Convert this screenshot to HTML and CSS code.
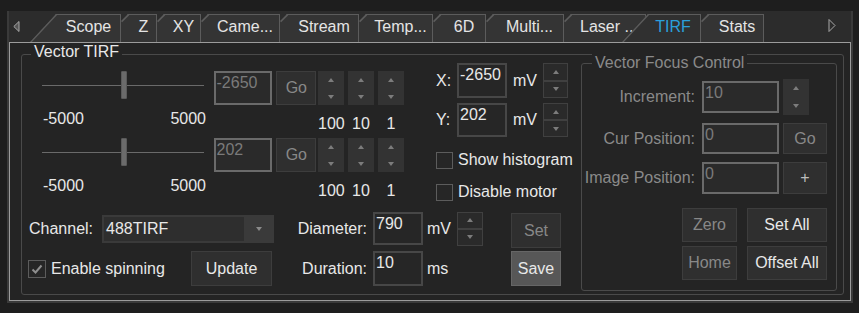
FILE: index.html
```html
<!DOCTYPE html>
<html lang="en">
<head>
    <meta charset="UTF-8">
    <title>Vector TIRF</title>
    <link rel="stylesheet" href="styles.css">
</head>
<body>
    <div class="window">
        <div class="tabbar">
            <div class="tabbar__scroll">
                <svg width="7" height="11" viewBox="0 0 7 11"><polygon points="6,0.5 6,10.5 0.8,5.5" fill="#555" stroke="#a8a8a8"/></svg>
            </div>
            <div class="tab tab--slant tab--scope">Scope</div>
            <div class="tab tab--z">Z</div>
            <div class="tab tab--xy">XY</div>
            <div class="tab tab--camera">Came...</div>
            <div class="tab tab--stream">Stream</div>
            <div class="tab tab--temp">Temp...</div>
            <div class="tab tab--6d">6D</div>
            <div class="tab tab--multi">Multi...</div>
            <div class="tab tab--laser">Laser ..</div>
            <div class="tab tab--slant tab--active">TIRF</div>
            <div class="tab tab--stats">Stats</div>
            <div class="tabbar__spacer"></div>
            <div class="tabbar__scroll tabbar__scroll--right">
                <svg width="8" height="13" viewBox="0 0 8 13"><polygon points="1,0.5 1,12.5 7,6.5" fill="none" stroke="#a8a8a8"/></svg>
            </div>
        </div>

        <div class="pane">
            <div class="group">
                <div class="group__title">Vector TIRF</div>
                <div class="group__body">
                    <div class="main">
                        <div class="main__top">
                            <div class="sliders">
                                <div class="slider-row">
                                    <div class="slider">
                                        <span class="slider__track slider__track--left"></span>
                                        <span class="slider__handle"></span>
                                        <span class="slider__track"></span>
                                    </div>
                                    <div class="field field--disabled">-2650</div>
                                    <button class="btn" disabled>Go</button>
                                    <div class="spin"><span class="arrow arrow--up"></span><span class="arrow arrow--down"></span></div>
                                    <div class="spin"><span class="arrow arrow--up"></span><span class="arrow arrow--down"></span></div>
                                    <div class="spin"><span class="arrow arrow--up"></span><span class="arrow arrow--down"></span></div>
                                </div>
                                <div class="scale-row">
                                    <div class="scale"><span>-5000</span><span>5000</span></div>
                                    <div class="steps"><span>100</span><span>10</span><span>1</span></div>
                                </div>
                                <div class="slider-row">
                                    <div class="slider">
                                        <span class="slider__track slider__track--left"></span>
                                        <span class="slider__handle"></span>
                                        <span class="slider__track"></span>
                                    </div>
                                    <div class="field field--disabled">202</div>
                                    <button class="btn" disabled>Go</button>
                                    <div class="spin"><span class="arrow arrow--up"></span><span class="arrow arrow--down"></span></div>
                                    <div class="spin"><span class="arrow arrow--up"></span><span class="arrow arrow--down"></span></div>
                                    <div class="spin"><span class="arrow arrow--up"></span><span class="arrow arrow--down"></span></div>
                                </div>
                                <div class="scale-row">
                                    <div class="scale"><span>-5000</span><span>5000</span></div>
                                    <div class="steps"><span>100</span><span>10</span><span>1</span></div>
                                </div>
                            </div>

                            <div class="xy">
                                <div class="xy__row">
                                    <span class="xy__label">X:</span>
                                    <div class="field">-2650</div>
                                    <span class="unit">mV</span>
                                    <div class="spin spin--split">
                                        <span class="spin__half"><span class="arrow arrow--up"></span></span>
                                        <span class="spin__half"><span class="arrow arrow--down"></span></span>
                                    </div>
                                </div>
                                <div class="xy__row">
                                    <span class="xy__label">Y:</span>
                                    <div class="field">202</div>
                                    <span class="unit">mV</span>
                                    <div class="spin spin--split">
                                        <span class="spin__half"><span class="arrow arrow--up"></span></span>
                                        <span class="spin__half"><span class="arrow arrow--down"></span></span>
                                    </div>
                                </div>
                                <label class="checkrow"><span class="check"></span>Show histogram</label>
                                <label class="checkrow"><span class="check"></span>Disable motor</label>
                            </div>
                        </div>

                        <div class="controls">
                            <div class="controls__lead">
                                <span class="channel-label">Channel:</span>
                                <div class="combo">
                                    <div class="combo__field">488TIRF</div>
                                    <div class="combo__arrow"><span class="arrow arrow--down arrow--combo"></span></div>
                                </div>
                            </div>
                            <span class="label--right">Diameter:</span>
                            <div class="field">790</div>
                            <span class="unit">mV</span>
                            <div class="spin spin--split">
                                <span class="spin__half"><span class="arrow arrow--up"></span></span>
                                <span class="spin__half"><span class="arrow arrow--down"></span></span>
                            </div>
                            <button class="btn btn--cell btn--set" disabled>Set</button>

                            <div class="controls__lead">
                                <label class="checkrow checkrow--wide">
                                    <span class="check">
                                        <svg width="16" height="16" viewBox="0 0 16 16"><polyline points="3.5,8.5 6.5,11.5 12.5,4.5" fill="none" stroke="#8e8e8e" stroke-width="2"/></svg>
                                    </span>Enable spinning
                                </label>
                                <button class="btn btn--update">Update</button>
                            </div>
                            <span class="label--right">Duration:</span>
                            <div class="field field--tall">10</div>
                            <span class="unit">ms</span>
                            <span></span>
                            <button class="btn btn--cell btn--primary">Save</button>
                        </div>
                    </div>

                    <div class="vfc">
                        <div class="vfc__title">Vector Focus Control</div>
                        <div class="vfc__grid">
                            <span class="vfc__label">Increment:</span>
                            <div class="field field--disabled field--inc">10</div>
                            <div class="spin spin--tall"><span class="arrow arrow--up"></span><span class="arrow arrow--down"></span></div>

                            <span class="vfc__label">Cur Position:</span>
                            <div class="field field--disabled">0</div>
                            <button class="btn" disabled>Go</button>

                            <span class="vfc__label">Image Position:</span>
                            <div class="field field--disabled">0</div>
                            <button class="btn btn--plus">+</button>
                        </div>
                        <div class="vfc__actions">
                            <div class="vfc__pair">
                                <button class="btn btn--narrow" disabled>Zero</button>
                                <button class="btn btn--wide">Set All</button>
                            </div>
                            <div class="vfc__pair">
                                <button class="btn btn--narrow" disabled>Home</button>
                                <button class="btn btn--wide">Offset All</button>
                            </div>
                        </div>
                    </div>
                </div>
            </div>
        </div>
    </div>
</body>
</html>
```

FILE: styles.css
```css
* {
    box-sizing: border-box;
    margin: 0;
    padding: 0;
}

body {
    width: 859px;
    height: 313px;
    overflow: hidden;
    background-color: #1e1e1e;
    font-family: "Liberation Sans", Arial, sans-serif;
    font-size: 16px;
    line-height: 18px;
    color: #e8e8e8;
}

.window {
    width: 846px;
    margin: 11px 0 0 7px;
    border: 2px solid #3a3a3a;
    border-top: 0;
    background-color: #2c2c2c;
}

/* tab strip */
.tabbar {
    display: flex;
    height: 31px;
    padding-top: 3px;
}

.tabbar__scroll {
    flex: none;
    width: 21px;
    padding: 4px 0 0 4px;
}

.tabbar__scroll--right {
    width: 23px;
    padding: 4px 0 0 0;
}

.tabbar__spacer {
    flex: 1;
}

.tab {
    position: relative;
    flex: none;
    height: 28px;
    padding-left: 10px;
    text-align: center;
    line-height: 23px;
    white-space: nowrap;
    color: #e4e4e4;
    background-color: #343434;
    border-top: 1px solid #5c5c5c;
    border-right: 1px solid #5c5c5c;
    clip-path: polygon(7px 0, 100% 0, 100% 100%, 0 100%, 0 7px);
}

.tab::before {
    content: "";
    position: absolute;
    left: -1.5px;
    top: 1.5px;
    width: 10px;
    height: 2px;
    background-color: #5c5c5c;
    transform: rotate(-45deg);
}

.tab--slant {
    padding-left: 27px;
    clip-path: polygon(26px 0, 100% 0, 100% 100%, 0 100%);
}

.tab--slant::before {
    left: -6.5px;
    top: 12px;
    width: 39px;
    transform: rotate(-47deg);
}

.tab--scope { width: 91px; }
.tab--z { width: 36px; }
.tab--xy { width: 44px; }
.tab--camera { width: 79px; }
.tab--stream { width: 79px; }
.tab--temp { width: 74px; }
.tab--6d { width: 53px; }
.tab--multi { width: 78px; }
.tab--stats { width: 63px; }

.tab--laser {
    width: 82px;
    padding-left: 16px;
    text-align: left;
}

.tab--active {
    z-index: 1;
    width: 79px;
    margin-left: -24px;
    padding-left: 24px;
    color: #2a9fdc;
    background-color: #303030;
}

/* page */
.pane {
    height: 259px;
    padding: 11px 6px 5px 11px;
    border: 1px solid #9c9c9c;
    background-color: #242424;
}

.group {
    height: 100%;
    border: 1px solid #4a4a4a;
    border-radius: 3px;
}

.group__title {
    width: fit-content;
    margin: -12px 0 0 9px;
    padding: 0 3px;
    background-color: #242424;
}

.group__body {
    display: flex;
    align-items: flex-start;
}

.main {
    flex: none;
    width: 559px;
}

.main__top {
    display: flex;
    align-items: flex-start;
    height: 151px;
}

.sliders {
    width: 362px;
    margin: 10px 0 0 20px;
}

.slider-row {
    display: flex;
    align-items: flex-start;
    height: 34px;
}

.slider {
    display: flex;
    align-items: center;
    width: 162px;
    height: 28px;
    margin-right: 10px;
}

.slider__track {
    flex: 1;
    height: 1px;
    background-color: #6a6a6a;
}

.slider__track--left {
    flex: none;
    width: 79px;
}

.slider__handle {
    width: 6px;
    height: 28px;
    background-color: #6b6b6b;
    border: 1px solid #5a5a5a;
    border-radius: 1px;
}

.scale-row {
    display: flex;
    height: 33px;
}

.scale {
    display: flex;
    justify-content: space-between;
    width: 165px;
    padding: 5px 0 0 1px;
}

.steps {
    display: flex;
    gap: 4px;
    margin-left: 112px;
    padding-top: 10px;
}

.steps span {
    width: 26px;
    text-align: center;
}

/* inputs */
.field {
    padding: 1px;
    border: 2px solid #474747;
    background-color: #262626;
    color: #e8e8e8;
}

.field--disabled {
    border-color: #6a6a6a;
    background-color: #2a2a2a;
    color: #7a7a7a;
}

.sliders .field {
    width: 59px;
    height: 34px;
}

.btn {
    font: inherit;
    line-height: 18px;
    color: #e8e8e8;
    background-color: #2f2f2f;
    border: 1px solid #3d3d3d;
}

.btn:disabled {
    color: #888;
}

.btn--primary {
    background-color: #575757;
    border-color: #666;
}

.sliders .btn {
    width: 40px;
    height: 34px;
    margin-left: 4px;
}

.spin {
    display: flex;
    flex-direction: column;
    align-items: center;
    justify-content: space-around;
    width: 26px;
    height: 34px;
    background-color: #333;
}

.sliders .spin {
    margin-left: 4px;
}

.sliders .btn + .spin {
    margin-left: 2px;
}

.spin--split {
    justify-content: stretch;
    background: none;
}

.spin__half {
    flex: 1;
    display: flex;
    align-items: center;
    justify-content: center;
    width: 100%;
    border: 1px solid #404040;
    background-color: #2a2a2a;
}

.arrow {
    width: 0;
    height: 0;
    border-left: 3.5px solid transparent;
    border-right: 3.5px solid transparent;
}

.arrow--up {
    border-bottom: 4px solid #7c7c7c;
}

.arrow--down {
    border-top: 4px solid #7c7c7c;
}

.arrow--combo {
    border-top-color: #8a8a8a;
}

/* X / Y */
.xy {
    margin: 2px 0 0 32px;
}

.xy__row {
    display: flex;
    align-items: center;
    height: 35px;
}

.xy__row + .xy__row {
    height: 34px;
    margin-top: 5px;
}

.xy__label {
    width: 21px;
}

.xy .field {
    width: 50px;
    height: 100%;
}

.xy .unit {
    width: 36px;
    padding-left: 6px;
}

.xy .spin {
    width: 25px;
    height: 100%;
}

.checkrow {
    display: flex;
    align-items: center;
    gap: 5px;
}

.xy .checkrow {
    margin-top: 14px;
}

.check {
    flex: none;
    width: 17px;
    height: 17px;
    border: 1px solid #5c5c5c;
    background-color: #262626;
}

.check svg {
    display: block;
}

/* bottom rows */
.controls {
    display: grid;
    grid-template-columns: 246px 93px 56px 34px 26px 78px;
    grid-template-rows: 33px 35px;
    row-gap: 6px;
    align-items: center;
    margin-left: 6px;
}

.controls__lead {
    display: flex;
    align-items: center;
}

.channel-label {
    margin-left: 1px;
}

.combo {
    display: flex;
    width: 173px;
    height: 28px;
    margin-left: 9px;
    padding: 2px 0 2px 2px;
    background-color: #3a3a3a;
}

.combo__field {
    flex: 1;
    padding-left: 2px;
    line-height: 24px;
    background-color: #2e2e2e;
}

.combo__arrow {
    display: flex;
    align-items: center;
    justify-content: center;
    width: 30px;
}

.label--right {
    text-align: right;
}

.controls .field {
    justify-self: end;
    width: 50px;
    height: 33px;
}

.controls .field--tall {
    height: 35px;
}

.controls .unit {
    padding-left: 4px;
}

.controls .spin {
    height: 34px;
}

.btn--cell {
    justify-self: end;
    width: 50px;
    height: 35px;
}

.btn--set {
    align-self: start;
    margin-top: 1px;
}

.checkrow--wide {
    width: 163px;
}

.controls .check {
    width: 18px;
    height: 18px;
}

.btn--update {
    width: 81px;
    height: 35px;
}

/* Vector Focus Control */
.vfc {
    flex: none;
    width: 256px;
    height: 228px;
    margin-top: 2px;
    border: 1px solid #4a4a4a;
    border-radius: 3px;
    color: #8a8a8a;
}

.vfc__title {
    width: fit-content;
    margin: -10px 0 0 10px;
    padding: 0 3px;
    background-color: #242424;
}

.vfc__grid {
    display: grid;
    grid-template-columns: 116px 81px 48px;
    grid-template-rows: 36px 31px 32px;
    row-gap: 8px;
    align-items: center;
    margin-top: 7px;
}

.vfc__label {
    text-align: right;
    padding-right: 3px;
}

.vfc .field {
    justify-self: end;
    width: 77px;
    height: 100%;
}

.vfc .field--inc {
    height: 32px;
}

.vfc__grid .btn {
    justify-self: end;
    width: 44px;
    height: 100%;
}

.btn--plus {
    color: #bdbdbd;
}

.spin--tall {
    height: 36px;
    margin-left: 4px;
}

.vfc__actions {
    display: flex;
    flex-direction: column;
    gap: 4px;
    width: 245px;
    margin-top: 14px;
}

.vfc__pair {
    display: flex;
    justify-content: flex-end;
    gap: 10px;
}

.btn--narrow {
    width: 55px;
    height: 34px;
}

.btn--wide {
    width: 80px;
    height: 34px;
}
```
